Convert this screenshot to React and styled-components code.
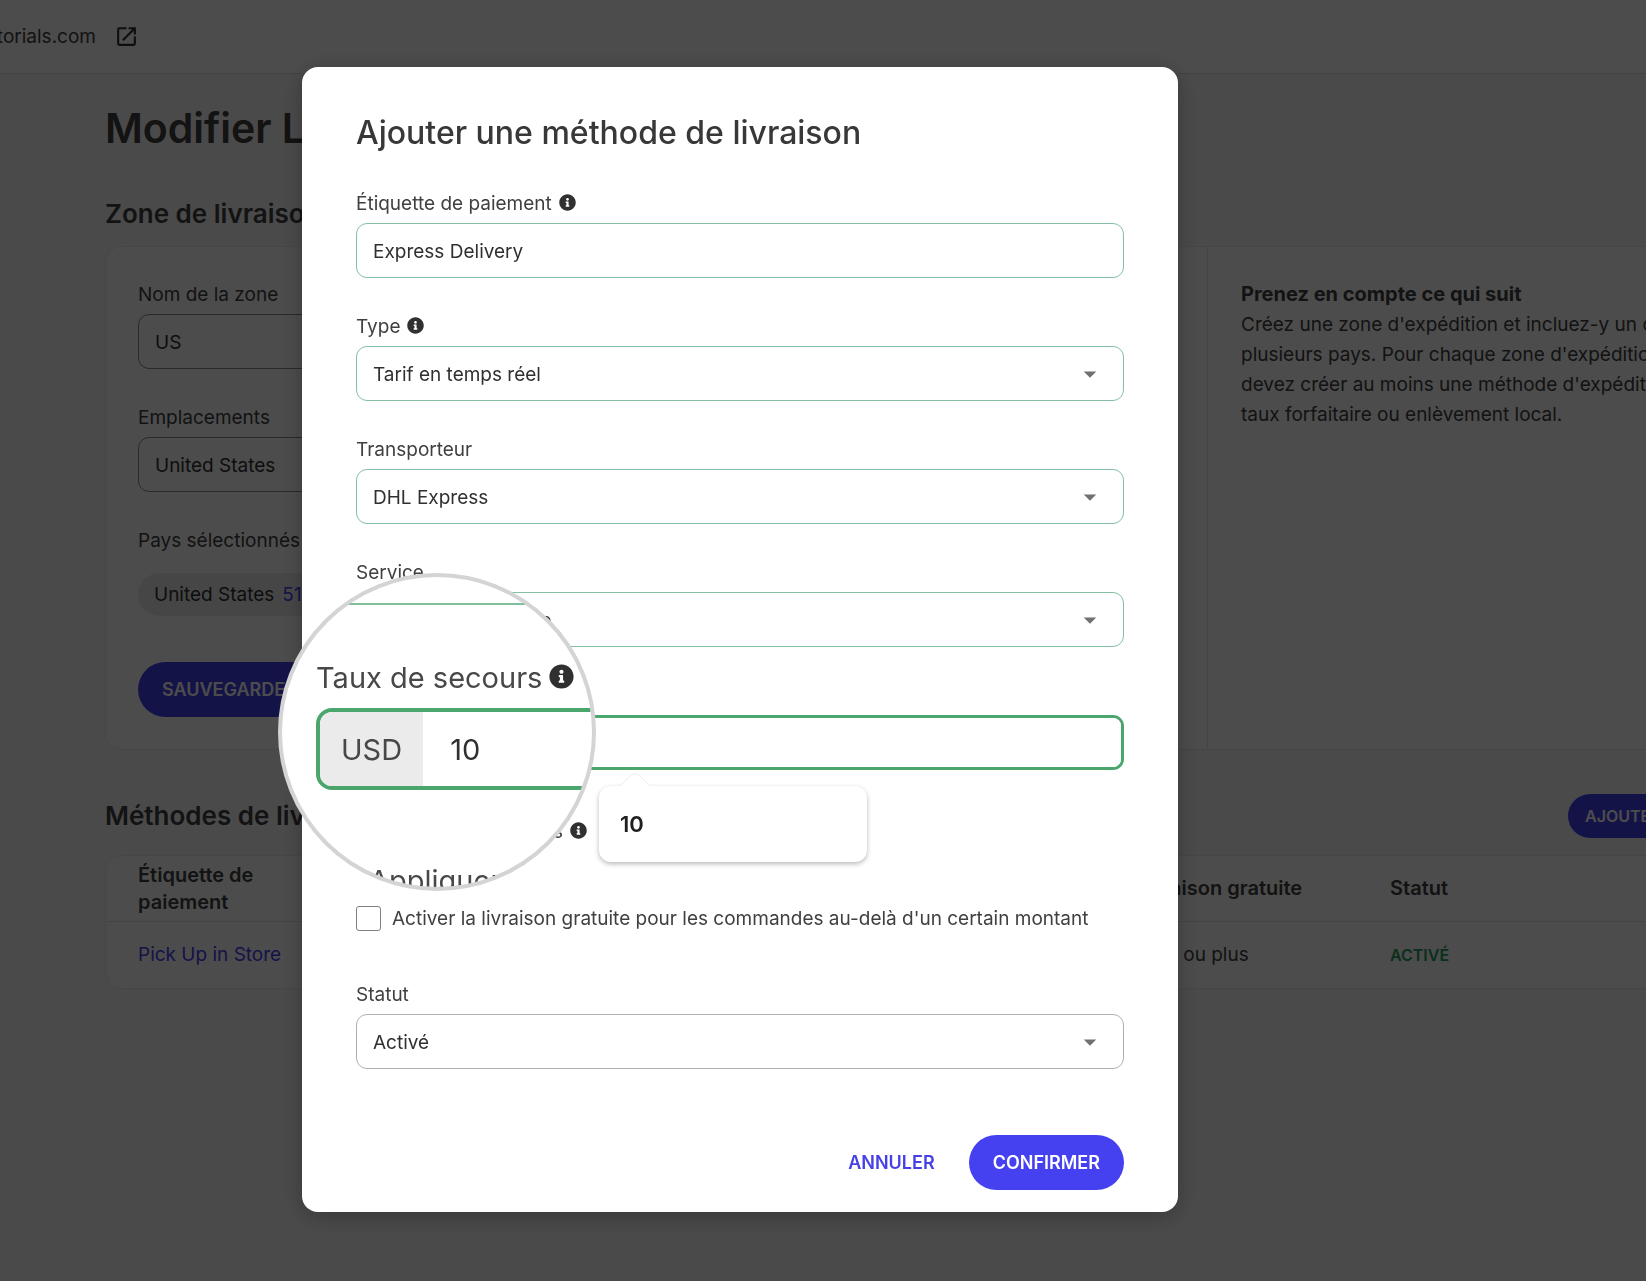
import React from 'react';
import styled, { createGlobalStyle } from 'styled-components';
import { FaInfoCircle } from 'react-icons/fa';
import { MdArrowDropDown, MdOpenInNew } from 'react-icons/md';

const GlobalStyle = createGlobalStyle`
    * {
        box-sizing: border-box;
    }

    body {
        background-color: #f8f8f8;
        color: #404040;
        font-family: Inter, 'Liberation Sans', sans-serif;
        font-size: 19px;
        line-height: 26px;
        margin: 0;
    }

    button,
    input,
    select {
        font: inherit;
    }
`;

const Page = styled.div`
    min-height: 100vh;
    overflow: hidden;
`;

const TopBar = styled.header`
    align-items: center;
    background-color: #ffffff;
    border-bottom: 1px solid #e0e0e0;
    display: flex;
    gap: 18px;
    height: 74px;
`;

const SiteName = styled.span`
    display: flex;
    justify-content: flex-end;
    overflow: hidden;
    width: 96px;
`;

const IconLink = styled.a`
    color: #303030;
    display: flex;
`;

const Content = styled.main`
    margin-right: -98px;
    padding: 24px 0 0 105px;
`;

const PageTitle = styled.h1`
    font-size: 41px;
    font-weight: 600;
    line-height: 60px;
    margin: 0;
`;

const SectionTitle = styled.h2`
    font-size: 26px;
    font-weight: 600;
    line-height: 36px;
    margin: 0;
`;

const SectionHead = styled.div`
    align-items: center;
    display: flex;
    height: 44px;
    justify-content: space-between;
    margin: ${props => props.$margin};
`;

const Card = styled.section`
    background-color: #ffffff;
    border: 1px solid #ececec;
    border-radius: 16px;
    display: flex;
`;

const ZoneForm = styled.div`
    border-right: 1px solid #e4e4e4;
    flex: 1;
    padding: 33px 32px 32px;
`;

const Aside = styled.aside`
    flex: 0 0 535px;
    line-height: 30px;
    min-width: 0;
    padding: 31px 33px;
    white-space: nowrap;
`;

const AsideTitle = styled.h3`
    font-size: 20px;
    font-weight: 700;
    line-height: 32px;
    margin: 0;
`;

const Paragraph = styled.p`
    margin: 0;
`;

const Field = styled.div`
    display: flex;
    flex-direction: column;
    gap: ${props => props.$labelGap || 4}px;
    margin-bottom: ${props => props.$gap || 34}px;
`;

const Label = styled.label`
    align-items: center;
    display: flex;
    height: 30px;
`;

const Input = styled.input`
    background-color: #ffffff;
    border: 1px solid ${props => props.$border || '#8c8c8c'};
    border-radius: 11px;
    color: #303030;
    height: 55px;
    outline: none;
    padding: 2px 16px 0;
    width: 100%;
`;

const SelectBox = styled.div`
    align-items: center;
    display: grid;
    grid-template-columns: 1fr 49px;

    > svg {
        color: #707070;
        grid-area: 1 / 2;
        pointer-events: none;
    }
`;

const NativeSelect = styled(Input)`
    appearance: none;
    grid-area: 1 / 1 / 2 / 3;
`;

const Tag = styled.span`
    align-items: center;
    align-self: flex-start;
    background-color: #ececec;
    border-radius: 22px;
    color: #303030;
    display: flex;
    gap: 8px;
    height: 43px;
    padding: 0 16px;
`;

const TagCount = styled.span`
    color: #4640f0;
`;

const Button = styled.button`
    background-color: ${props => (props.$plain ? 'transparent' : '#4540f0')};
    border: 0;
    border-radius: 28px;
    color: ${props => (props.$plain ? '#4540e8' : '#ffffff')};
    font-size: ${props => (props.$small ? 16 : 18)}px;
    font-weight: 600;
    height: ${props => (props.$small ? 44 : 55)}px;
    min-width: ${props => (props.$small ? 176 : 0)}px;
    padding: 0 ${props => (props.$small ? 17 : 24)}px;
    text-align: left;
    white-space: nowrap;
`;

const MethodsTable = styled.table`
    background-color: #ffffff;
    border: 1px solid #ececec;
    border-radius: 16px;
    border-spacing: 0;
    table-layout: fixed;
    width: 100%;

    th,
    td {
        height: 66px;
        padding: 0 32px;
        text-align: left;
    }

    th {
        border-bottom: 1px solid #e4e4e4;
        font-size: 20px;
        font-weight: 600;
        line-height: 27px;
    }
`;

const Column = styled.col`
    width: ${props => props.$width};
`;

const MethodLink = styled.a`
    color: #4640f0;
    text-decoration: none;
`;

const Enabled = styled.span`
    color: #1f9d61;
    font-size: 16px;
    font-weight: 600;
`;

const Overlay = styled.div`
    align-items: flex-start;
    background-color: rgba(0, 0, 0, 0.7);
    display: flex;
    inset: 0;
    justify-content: center;
    padding: 67px 166px 40px 0;
    position: fixed;
`;

const Modal = styled.form`
    background-color: #ffffff;
    border-radius: 16px;
    box-shadow: 0 4px 24px rgba(0, 0, 0, 0.25);
    max-width: 876px;
    padding: 44px 54px 22px;
    position: relative;
    width: 100%;
`;

const ModalTitle = styled.h2`
    color: #383838;
    font-size: 32px;
    font-weight: 500;
    line-height: 44px;
    margin: 0 0 34px;
`;

const CheckRow = styled.label`
    align-items: center;
    display: flex;
    height: 25px;
    margin-bottom: ${props => props.$gap}px;
`;

const Checkbox = styled.input`
    appearance: none;
    background-color: #ffffff;
    border: 1px solid #808080;
    border-radius: 3px;
    height: 25px;
    margin: 0 11px 0 0;
    width: 25px;
`;

const InfoMark = styled.span`
    color: #303030;
    display: flex;
    padding: 0 0 3px 7px;
`;

const Actions = styled.div`
    display: flex;
    gap: 10px;
    justify-content: flex-end;
`;

const MoneyBox = styled.div`
    border: ${props => (props.$large ? 4 : 3)}px solid #4aa66c;
    border-radius: ${props => (props.$large ? 16 : 11)}px;
    display: flex;
    height: ${props => (props.$large ? 82 : 55)}px;
    overflow: hidden;
`;

const Currency = styled.span`
    align-items: center;
    background-color: #ebebeb;
    display: flex;
    padding: 2px ${props => (props.$large ? 21 : 16)}px 0;
`;

const MoneyInput = styled.input`
    border: 0;
    color: #303030;
    flex: 1;
    min-width: 0;
    outline: none;
    padding: 0 16px;
`;

const LargeAmount = styled.span`
    align-items: center;
    color: #303030;
    display: flex;
    padding: 2px 27px 0;
`;

const Suggestion = styled.div`
    background-color: #ffffff;
    border-radius: 12px;
    box-shadow: 0 2px 5px rgba(0, 0, 0, 0.28);
    color: #202020;
    font-size: 22px;
    font-weight: 600;
    left: 297px;
    line-height: 76px;
    padding-left: 21px;
    position: absolute;
    top: 719px;
    width: 268px;
`;

const SuggestionArrow = styled.svg`
    left: 21px;
    position: absolute;
    top: -13px;
`;

const Lens = styled.div`
    background-color: #ffffff;
    border: 4px solid #d4d4d4;
    border-radius: 50%;
    color: #484848;
    font-size: 29px;
    height: 318px;
    left: -24px;
    line-height: 40px;
    overflow: hidden;
    position: absolute;
    top: 506px;
    width: 318px;
`;

const LensEdge = styled.div`
    border-bottom: 2px solid #7fbf9c;
    height: 28px;
    margin-bottom: 53px;
`;

const LensField = styled.div`
    margin: 0 -60px 0 34px;
`;

const LensLabel = styled.div`
    align-items: center;
    display: flex;
    height: 40px;
    margin-bottom: 10px;
`;

const LensText = styled.div`
    margin: 71px 0 0 87px;
`;

const Info = ({ size = 17 }) => (
    <InfoMark>
        <FaInfoCircle size={size} />
    </InfoMark>
);

const Select = ({ id, value, border }) => (
    <SelectBox>
        <NativeSelect as="select" id={id} defaultValue={value} $border={border}>
            <option>{value}</option>
        </NativeSelect>
        <MdArrowDropDown size={30} />
    </SelectBox>
);

const green = '#84bfa3';

const ZoneCard = () => (
    <Card>
        <ZoneForm>
            <Field>
                <Label htmlFor="zone">Nom de la zone</Label>
                <Input id="zone" defaultValue="US" />
            </Field>
            <Field>
                <Label htmlFor="places">Emplacements</Label>
                <Input id="places" defaultValue="United States" />
            </Field>
            <Field $labelGap={17} $gap={46}>
                <Label as="span">Pays sélectionnés</Label>
                <Tag>
                    United States <TagCount>51/51</TagCount>
                </Tag>
            </Field>
            <Button type="button">SAUVEGARDER</Button>
        </ZoneForm>
        <Aside>
            <AsideTitle>Prenez en compte ce qui suit</AsideTitle>
            <Paragraph>
                Créez une zone d'expédition et incluez-y un ou
                <br />
                plusieurs pays. Pour chaque zone d'expédition, vous
                <br />
                devez créer au moins une méthode d'expédition :
                <br />
                taux forfaitaire ou enlèvement local.
            </Paragraph>
        </Aside>
    </Card>
);

const Methods = () => (
    <MethodsTable>
        <colgroup>
            <Column $width="230px" />
            <Column />
            <Column $width="256px" />
            <Column $width="385px" />
        </colgroup>
        <thead>
            <tr>
                <th>Étiquette de paiement</th>
                <th>Type</th>
                <th>Livraison gratuite</th>
                <th>Statut</th>
            </tr>
        </thead>
        <tbody>
            <tr>
                <td>
                    <MethodLink href="#pickup">Pick Up in Store</MethodLink>
                </td>
                <td />
                <td>$100 ou plus</td>
                <td>
                    <Enabled>ACTIVÉ</Enabled>
                </td>
            </tr>
        </tbody>
    </MethodsTable>
);

const Magnifier = () => (
    <Lens aria-hidden="true">
        <LensEdge />
        <LensField>
            <LensLabel>
                Taux de secours
                <Info size={25} />
            </LensLabel>
            <MoneyBox $large>
                <Currency $large>USD</Currency>
                <LargeAmount>10</LargeAmount>
            </MoneyBox>
        </LensField>
        <LensText>Appliquer</LensText>
    </Lens>
);

const ShippingModal = () => (
    <Modal>
        <ModalTitle>Ajouter une méthode de livraison</ModalTitle>
        <Field>
            <Label htmlFor="label">
                Étiquette de paiement
                <Info />
            </Label>
            <Input id="label" defaultValue="Express Delivery" $border={green} />
        </Field>
        <Field>
            <Label htmlFor="type">
                Type
                <Info />
            </Label>
            <Select id="type" value="Tarif en temps réel" border={green} />
        </Field>
        <Field>
            <Label htmlFor="carrier">Transporteur</Label>
            <Select id="carrier" value="DHL Express" border={green} />
        </Field>
        <Field>
            <Label htmlFor="service">Service</Label>
            <Select id="service" value="Package Worldwide" border={green} />
        </Field>
        <Field $gap={49}>
            <Label htmlFor="rate">Taux de secours</Label>
            <MoneyBox>
                <Currency>USD</Currency>
                <MoneyInput id="rate" defaultValue="10" />
            </MoneyBox>
        </Field>
        <CheckRow $gap={62}>
            <Checkbox type="checkbox" />
            Appliquer les taxes
            <Info />
        </CheckRow>
        <CheckRow $gap={49}>
            <Checkbox type="checkbox" />
            Activer la livraison gratuite pour les commandes au-delà d'un
            certain montant
        </CheckRow>
        <Field $gap={66}>
            <Label htmlFor="status">Statut</Label>
            <Select id="status" value="Activé" border="#b0b0b0" />
        </Field>
        <Actions>
            <Button type="button" $plain>
                ANNULER
            </Button>
            <Button type="button">CONFIRMER</Button>
        </Actions>
        <Suggestion>
            <SuggestionArrow width="30" height="14" viewBox="0 0 30 14">
                <path
                    d="M0 13 L11 2 Q15 -1 19 2 L30 13"
                    fill="#ffffff"
                    stroke="#ededed"
                />
            </SuggestionArrow>
            10
        </Suggestion>
        <Magnifier />
    </Modal>
);

const App = () => (
    <>
        <GlobalStyle />
        <Page>
            <TopBar>
                <SiteName>tutorials.com</SiteName>
                <IconLink href="#site" aria-label="Ouvrir le site">
                    <MdOpenInNew size={25} />
                </IconLink>
            </TopBar>
            <Content>
                <PageTitle>Modifier Livraison</PageTitle>
                <SectionHead $margin="34px 0 10px">
                    <SectionTitle>Zone de livraison</SectionTitle>
                </SectionHead>
                <ZoneCard />
                <SectionHead $margin="44px 0 17px">
                    <SectionTitle>Méthodes de livraison</SectionTitle>
                    <Button type="button" $small>
                        AJOUTER TAUX
                    </Button>
                </SectionHead>
                <Methods />
            </Content>
        </Page>
        <Overlay>
            <ShippingModal />
        </Overlay>
    </>
);

export default App;
